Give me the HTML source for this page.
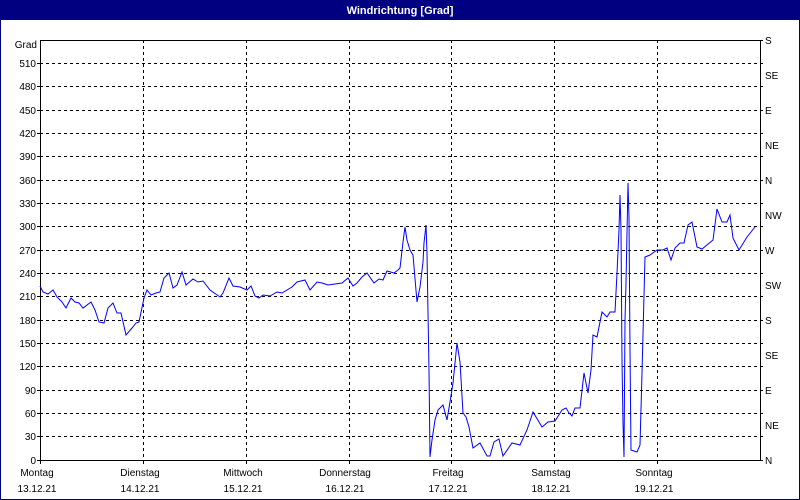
<!DOCTYPE html>
<html><head><meta charset="utf-8"><style>
html,body{margin:0;padding:0;background:#fff;}
svg{display:block;}
text{font-family:"Liberation Sans",sans-serif;font-size:10px;fill:#000;}
</style></head><body>
<svg width="800" height="500" xmlns="http://www.w3.org/2000/svg" shape-rendering="crispEdges">
<rect x="0" y="0" width="800" height="500" fill="#fff"/>
<rect x="0.5" y="0.5" width="799" height="499" fill="none" stroke="#000080"/>
<rect x="0" y="0" width="800" height="20" fill="#000080"/>
<text x="400" y="14" text-anchor="middle" style="fill:#fff;font-weight:bold;font-size:11px">Windrichtung [Grad]</text>
<g stroke="#000" stroke-dasharray="3,3">
<line x1="40" y1="63.5" x2="760" y2="63.5"/><line x1="40" y1="86.5" x2="760" y2="86.5"/><line x1="40" y1="110.5" x2="760" y2="110.5"/><line x1="40" y1="133.5" x2="760" y2="133.5"/><line x1="40" y1="156.5" x2="760" y2="156.5"/><line x1="40" y1="180.5" x2="760" y2="180.5"/><line x1="40" y1="203.5" x2="760" y2="203.5"/><line x1="40" y1="226.5" x2="760" y2="226.5"/><line x1="40" y1="250.5" x2="760" y2="250.5"/><line x1="40" y1="273.5" x2="760" y2="273.5"/><line x1="40" y1="296.5" x2="760" y2="296.5"/><line x1="40" y1="320.5" x2="760" y2="320.5"/><line x1="40" y1="343.5" x2="760" y2="343.5"/><line x1="40" y1="366.5" x2="760" y2="366.5"/><line x1="40" y1="390.5" x2="760" y2="390.5"/><line x1="40" y1="413.5" x2="760" y2="413.5"/><line x1="40" y1="436.5" x2="760" y2="436.5"/>
<line x1="143.5" y1="40" x2="143.5" y2="460"/><line x1="246.5" y1="40" x2="246.5" y2="460"/><line x1="349.5" y1="40" x2="349.5" y2="460"/><line x1="451.5" y1="40" x2="451.5" y2="460"/><line x1="554.5" y1="40" x2="554.5" y2="460"/><line x1="657.5" y1="40" x2="657.5" y2="460"/>
</g>
<g stroke="#000">
<line x1="40.5" y1="40" x2="40.5" y2="461"/><line x1="40" y1="40.5" x2="761" y2="40.5"/><line x1="37" y1="460.5" x2="761" y2="460.5"/><line x1="760.5" y1="40" x2="760.5" y2="461"/>
<path d="M37 63.5h3M37 86.5h3M37 110.5h3M37 133.5h3M37 156.5h3M37 180.5h3M37 203.5h3M37 226.5h3M37 250.5h3M37 273.5h3M37 296.5h3M37 320.5h3M37 343.5h3M37 366.5h3M37 390.5h3M37 413.5h3M37 436.5h3"/>
<path d="M760 40.5h3M760 63.5h3M760 86.5h3M760 110.5h3M760 133.5h3M760 156.5h3M760 180.5h3M760 203.5h3M760 226.5h3M760 250.5h3M760 273.5h3M760 296.5h3M760 320.5h3M760 343.5h3M760 366.5h3M760 390.5h3M760 413.5h3M760 436.5h3M760 460.5h3"/>
<path d="M40.5 460v4M143.5 460v4M246.5 460v4M349.5 460v4M451.5 460v4M554.5 460v4M657.5 460v4"/>
</g>
<g text-anchor="end">
<text x="37" y="48">Grad</text>
<text x="36" y="67">510</text><text x="36" y="90">480</text><text x="36" y="114">450</text><text x="36" y="137">420</text><text x="36" y="160">390</text><text x="36" y="184">360</text><text x="36" y="207">330</text><text x="36" y="230">300</text><text x="36" y="254">270</text><text x="36" y="277">240</text><text x="36" y="300">210</text><text x="36" y="324">180</text><text x="36" y="347">150</text><text x="36" y="370">120</text><text x="36" y="394">90</text><text x="36" y="417">60</text><text x="36" y="440">30</text><text x="36" y="464">0</text>
</g>
<g>
<text x="765" y="44">S</text><text x="765" y="79">SE</text><text x="765" y="114">E</text><text x="765" y="149">NE</text><text x="765" y="184">N</text><text x="765" y="219">NW</text><text x="765" y="254">W</text><text x="765" y="289">SW</text><text x="765" y="324">S</text><text x="765" y="359">SE</text><text x="765" y="394">E</text><text x="765" y="429">NE</text><text x="765" y="464">N</text>
</g>
<g text-anchor="middle">
<text x="37" y="476">Montag</text><text x="37" y="492">13.12.21</text>
<text x="140" y="476">Dienstag</text><text x="140" y="492">14.12.21</text>
<text x="243" y="476">Mittwoch</text><text x="243" y="492">15.12.21</text>
<text x="345" y="476">Donnerstag</text><text x="345" y="492">16.12.21</text>
<text x="448" y="476">Freitag</text><text x="448" y="492">17.12.21</text>
<text x="551" y="476">Samstag</text><text x="551" y="492">18.12.21</text>
<text x="654" y="476">Sonntag</text><text x="654" y="492">19.12.21</text>
</g>
<polyline fill="none" stroke="#0000ff" stroke-width="1" shape-rendering="auto" points="40,286 43,292 48,294 53,290 57,297 62,302 66,308 71,298 75,302 79,303 83,308 91,302 95,310 99,322 104,323 108,308 113,303 117,313 121,313 126,335 132,328 136,323 139,322 144,298 147,290 151,295 156,293 160,292 164,278 169,273 173,288 177,285 182,272 186,285 193,279 198,282 203,281 210,290 220,297 223,293 229,278 233,286 240,287 247,290 251,286 255,296 259,298 263,295 270,296 277,292 282,293 292,287 297,282 305,280 310,290 317,282 322,283 328,285 335,284 342,283 348,278 353,286 357,283 362,277 367,273 374,283 379,279 383,280 387,271 394,273 398,270 400,268 403,242 405,227 407,240 410,250 413,255 417,302 420,287 423,262 424,243 426,225 427,253 428,313 429,370 430,457 432,440 435,420 438,410 443,405 447,420 450,402 453,383 457,343 460,362 463,413 466,417 469,427 473,448 480,443 487,456 490,456 494,442 499,439 503,456 512,443 520,445 527,430 533,412 542,427 548,422 555,421 562,410 566,408 569,413 572,416 575,408 580,408 584,373 588,393 591,370 593,335 597,337 602,312 607,317 610,312 615,312 617,273 619,230 620,195 621,230 622,360 623,423 624,457 625,320 626,283 628,183 629,218 630,350 631,450 637,452 640,445 642,373 645,257 650,255 657,250 663,250 667,248 671,260 675,248 680,243 684,243 688,225 692,222 697,247 702,249 713,240 717,209 722,222 727,222 730,215 733,238 739,250 747,237 755,227"/>
</svg>
</body></html>
